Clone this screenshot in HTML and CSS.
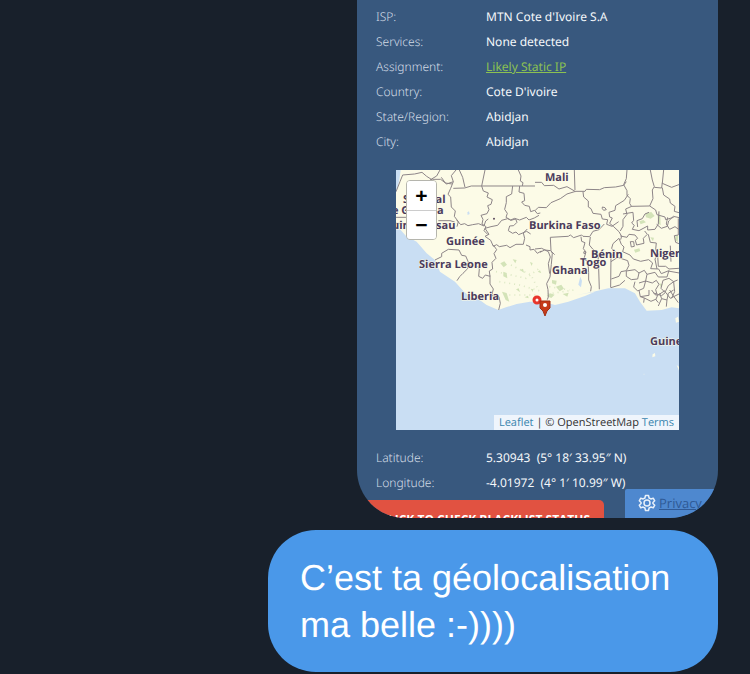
FILE: index.html
```html
<!DOCTYPE html>
<html lang="fr">

<head>
    <meta charset="UTF-8">
    <title>Messages</title>
    <link rel="stylesheet" href="styles.css">
</head>

<body>
    <main class="chat">
        <section class="card">
            <dl class="info">
                <dt>ISP:</dt>
                <dd>MTN Cote d'Ivoire S.A</dd>
                <dt>Services:</dt>
                <dd>None detected</dd>
                <dt>Assignment:</dt>
                <dd><a href="#">Likely Static IP</a></dd>
                <dt>Country:</dt>
                <dd>Cote D'ivoire</dd>
                <dt>State/Region:</dt>
                <dd>Abidjan</dd>
                <dt>City:</dt>
                <dd>Abidjan</dd>
            </dl>

            <div class="map">
                <svg class="tiles" viewBox="0 0 283 260" preserveAspectRatio="xMidYMid slice">
                    <rect class="sea" width="283" height="260" />
                    <!-- land and borders are drawn at three times the map scale -->
                    <g transform="scale(.3333)">
                        <path class="land" d="M14 0L10 30 2 65 0 65V178L12 178 30 198 62 215 92 250 117 270 132 305 177 335 202 363 227 385 244 385 272 405 307 420 330 412 362 402 402 395 432 395 457 400 477 405 517 395 567 378 597 365 540 376 592 365 637 355 687 355 717 370 732 395 752 422 797 420 827 412 849 415V0Z" />
                        <path class="land" d="M838 445l8-5 3 15-9 3zM770 553l7-4 1 10-9 3zM842 585l7 5v12zM742 612l3-1v3z" />
                        <!-- forests -->
                        <g class="green">
                            <path d="M313 280l12-6 8 10-10 8zM322 305l10 4 2 16-12-6zM350 268l12 2-4 10zM372 300l9-4 3 12zM402 276l8 3-3 9zM425 305l7-4 4 9zM318 365l14 4 8 26-11-5zM360 358l8-3 4 12zM386 382l10-5 2 8zM404 356l8 2-2 8zM468 330l14 2-2 12-12-4zM480 350l16-6 8 12-13 8zM452 378l10-8 14 4-10 10zM500 372l18-4-4 12zM748 130l18-4 10 12-12 8-14-4zM785 136l8 2 1 28-8-6zM730 154l12-4 8 7-16 6zM763 202l11 1-3 11zM714 239l16-4 3 8-15 5zM838 195l9 2-2 20-7-6zM790 340l10 3-5 10z" />
                            <path class="speckle" d="M300 305l90 20 40-30M310 335l60 10 70 20M340 375l90 0M345 285l60 30 20 40M460 350l60 10M455 372l80-12" />
                        </g>
                        <path class="lake" d="M214 127l5-3 2 8-6 3zM553 320l5 12-3 20-8-8 3-12z" />
                        <g class="border">
                            <path d="M0 65l12-30 8-20 36-3 22-5 14 12 17 11M102 30l20-12 10-18M109 28l25 0 18 14 20-7-6-18 14-17M136 22l12 17 20 3M172 35l-8 20-8 18 8 8 2 30 12 12-3 16 12 16-4 15M172 55l34-1 20-6 31 0M190 0l10 22 7 30M257 48l10-48M257 48h160M367 0l8 18-2 15 8 5-2 10" />
                            <path d="M257 48l5 15 15 6-4 12 16 8-4 14-10 4 4 12-6 12-18 5 6 12-3 14 12 8-6 12 12 12M182 150l12 14 12-3 10 6 14-3 18-3 16 7 5-15 8-6M267 175l18-5 20-4 12-15 18-5 10 5 14-4 4 10-10 10-12 1-4 14 13 8 10-4 8 8 24-10 12 8" />
                            <path d="M350 48l-3 24-16 8 0 18-5 20 8 12-4 12 14 8 12-5 15 5 20-8 8 8 16-6 14-8M371 48l-2 18 15 4 2 22-9 4 9 10 14 3 4 16 12-4 8 10 9-2" />
                            <path d="M267 175l12 18-12 6 17 12 8 18 10-5 8 6 22-4 10 7 18-10 22 0 4-18-4-16 12-12M292 225l10 14-8 12 6 14-12 12 2 20-10 6 2 16-14-4-8 10-12-6 2-22-4-8M390 225l12 5 0 10 12-2 10 12 12-7M117 270l20-10 0-10 20-12 32 2 8 16 12 2 8 18-2 20-14 14-10 10-8 12M203 275l28 18M282 317l0 25 10 15-5 20 22 3 4 20-5 20M432 247l14-7 18 2 12 12" />
                            <path d="M0 142l30 0M127 152h35l14 4M0 160h20" />
                        </g>
                        <g class="border" transform="translate(417 -15)">
                            <path d="M0 52l20 0 8 10 28-1 16 11 24-7 26 15M118 15l2 60M122 79h28l4-6 40 1 14-6 34-2 24-5 8-11M0 137l10-10 24 1 14-15 28-12 20-14 26-8M276 15l-2 26-8 18 10 18 0 14 10 10-2 14 6 10M346 15l6 30 6 20-6 10 2 26-10 22M358 67l22 2 2-16M386 15l-4 40 28 12 24-9M382 68l4 22 18 12 2 12 14 10-2 15 14 4" />
                            <path d="M144 80l2 16 14 12 0 18 8 5 6 14 24 3 4 14 16 2-3 14 16 6 20-14M280 88l-12 18-26 16-2 14-18 6 2 14 8 3-8 16 12 10 16 15 8 14-3 10M290 124l54-1 18 12 4 14 24 7 2 8 24-7M290 124l-18 8 4 16-12 16 0 20-8 14M202 126l8 2 4 6-8 2-4-5zM256 213l20 4 6-9 18 2 8 10-7 6 4 14 22-5-2-15 12-12-8-10" />
                            <path d="M264 147l30-5 2 24-6 8 8 7-6 12 20 4 26-14 0 12 22-2 10-16 2-38M308 186l-2-19 16-6 8-14 12-5M365 178l14 12 18-6 4-16 14-14 18 4M398 157l-4 20 10 16 16-8 14 10M340 208l6 24 18 2-2 20 8 14-10 14 6 30M430 160v50l-12 2 4 20 10 4M408 290l-2-48M368 268l2 36 22 0 10 8 30-2" />
                            <path d="M46 217l54-3 6-4 10 8 24-8 4 4 20 1 10-16 18-5 16-17M46 217l2 40 4 8-3 33-4 38-10 20 4 18 1 22-3 8M138 215l2 14 10 4-5 18 8 10-6 20 12 10 2 32 0 22 8 20-2 14M166 216l-3 24 10 12 16 14 2 42 2 65M252 220l-18 16-4 14 10 10-12 16-1 92M146 262l3-4 2 6-4 2z" />
                            <path d="M252 220l7 18 8 8-4 14 22 10 10 12 22 7 24-5 12 10-6 17 24 1 8 14 20-8 34 6M286 230l10 0 2 14-9 2zM228 290l20-13 30 10 4 14-8 16-16 3-6 14-23 8M274 318l26-4 12 10-4 18-19 2-15-10zM312 324l16-8 8 12-4 20-20 6M300 350l-4 16 12 12 18-8 6-22 20 6 12-8 8 12-10 16 4 14M336 328l24-6 10 14 26 0 6-20M384 346l18-6 14 10 12-5M384 346l-6 24 12 12 10-20 16-12 3 30-9 20" />
                            <path d="M0 252l20-2 20 10 6 16-6 20 4 30M228 368l26-8 16-14M356 384l24 8 12-10 14 18 28-14" />
                        </g>
                        <g class="border" transform="translate(417 360)">
                            <path d="M312 0l4 20 12 4-2 14M316 20l26-4 0-16M328 24l20 10 14-6 8 10M350 0l10 14 8 2-6 14M368 16l22-14M374 10l6 16-10 22M380 26l16 4 4-20 16-10M396 30l-2 20M404 0l10 16 16 22" />
                        </g>
                        <circle cx="294" cy="146" r="3" fill="#5b4a5c" />
                    </g>
                    <g class="places">
                        <text x="149" y="11">Mali</text>
                        <text x="7" y="33">Sénégal</text>
                        <text x="-4" y="44">e Gambia</text>
                        <text x="-12" y="59">Guiné-Bissau</text>
                        <text x="133" y="59">Burkina Faso</text>
                        <text x="50" y="75">Guinée</text>
                        <text x="23" y="98">Sierra Leone</text>
                        <text x="65" y="130">Liberia</text>
                        <text x="195" y="88">Bénin</text>
                        <text x="184" y="96">Togo</text>
                        <text x="156" y="104">Ghana</text>
                        <text x="254" y="87">Niger</text>
                        <text x="254" y="175">Guine</text>
                    </g>
                    <circle class="dot" cx="141" cy="130" r="3" />
                    <path class="pin" d="M144 131h10v7l-3 3-2 5-2-5-3-3z" />
                    <circle class="hole" cx="149" cy="135" r="2" />
                </svg>
                <div class="zoom">
                    <button type="button" aria-label="Zoom in">+</button>
                    <button type="button" aria-label="Zoom out">−</button>
                </div>
                <div class="credit"><a href="#">Leaflet</a> | © OpenStreetMap <a href="#">Terms</a></div>
            </div>

            <dl class="info">
                <dt>Latitude:</dt>
                <dd>5.30943&nbsp; (5° 18′ 33.95″ N)</dd>
                <dt>Longitude:</dt>
                <dd>-4.01972&nbsp; (4° 1′ 10.99″ W)</dd>
            </dl>

            <div class="actions">
                <button type="button" class="check">CLICK TO CHECK BLACKLIST STATUS</button>
                <div class="privacy">
                    <svg width="18" height="18" viewBox="0 0 24 24">
                        <path d="M10 2h4l.8 3.300 2.300 1.300 3.200-1 2 3.500-2.400 2.300v1.200l2.400 2.300-2 3.500-3.200-1-2.300 1.300L14 22h-4l-.8-3.300-2.300-1.300-3.200 1-2-3.500 2.400-2.300v-1.200L1.700 9.100l2-3.500 3.200 1 2.300-1.300z" />
                        <circle cx="12" cy="12" r="4" />
                    </svg>
                    <a href="#">Privacy</a>
                </div>
            </div>
        </section>

        <p class="bubble">C’est ta géolocalisation ma belle :-))))</p>
    </main>
</body>

</html>
```
FILE: styles.css
```css
* {
    box-sizing: border-box;
    padding: 0;
    margin: 0;
}

body {
    background-color: #18202b;
    font-family: "Open Sans", "Noto Sans", sans-serif;
    text-rendering: geometricPrecision;
}

.chat {
    display: flex;
    flex-direction: column;
    align-items: flex-end;
    gap: 12px;
    padding: 0 32px 2px;
}

/* carte de localisation */
.card {
    width: 100%;
    max-width: 361px;
    padding-top: 4px;
    border-radius: 0 0 48px 48px;
    background-color: #38587e;
    overflow: hidden;
}

.info {
    display: grid;
    grid-template-columns: 110px 1fr;
    padding: 0 19px;
    font-family: "Noto Sans", sans-serif;
    font-size: 12px;
    line-height: 25px;
    color: #f4f7fa;
}

.info dt {
    font-weight: 300;
    color: #d3dce6;
}

.info a {
    color: #8cc152;
}

.map {
    position: relative;
    height: 260px;
    margin: 16px 39px 15px;
    overflow: hidden;
}

.tiles {
    display: block;
    width: 100%;
    height: 100%;
}

.sea {
    fill: #c9def3;
}

.land {
    fill: #fcfbe7;
}

.green {
    fill: #d3e3b8;
}

.speckle {
    fill: none;
    stroke: #dce8c4;
    stroke-width: 5;
    stroke-dasharray: 3 12;
}

.lake {
    fill: #c9def3;
}

.border {
    fill: none;
    stroke: #8d8588;
    stroke-width: 3;
    stroke-linejoin: round;
}

.places {
    font-size: 11px;
    font-weight: 700;
    fill: #4b3b5c;
    stroke: #fcfbe7;
    stroke-width: 1px;
    paint-order: stroke;
}

.dot {
    fill: #fff;
    stroke: #e8352b;
    stroke-width: 3;
}

.pin {
    fill: #c63b1a;
    stroke: #a32f14;
}

.hole {
    fill: #fff;
}

.zoom {
    position: absolute;
    left: 10px;
    top: 10px;
    width: 31px;
    border: 1px solid #b5b5ad;
    border-radius: 4px;
    overflow: hidden;
}

.zoom button {
    display: block;
    width: 100%;
    height: 29px;
    border: 0;
    background-color: #fff;
    font: bold 21px/28px "Liberation Sans", sans-serif;
    color: #000;
}

.zoom button + button {
    border-top: 1px solid #ccc;
}

.credit {
    position: absolute;
    right: 0;
    bottom: 0;
    padding: 0 5px;
    background-color: rgba(255, 255, 255, .7);
    font-size: 11px;
    line-height: 15px;
    color: #333;
    white-space: nowrap;
}

.credit a {
    color: #3a85ae;
    text-decoration: none;
}

/* bas de la carte, coupé par l'arrondi */
.actions {
    display: flex;
    align-items: flex-start;
    gap: 21px;
    height: 29px;
    margin-top: -6px;
}

.check {
    flex: 1;
    height: 38px;
    margin-top: 11px;
    padding-right: 14px;
    border: 0;
    border-radius: 5px;
    background-color: #e15241;
    font: bold 12px "Open Sans", sans-serif;
    color: #fff;
    text-align: right;
    white-space: nowrap;
}

.privacy {
    display: flex;
    gap: 3px;
    width: 93px;
    height: 40px;
    padding: 5px 0 0 13px;
    border-radius: 2px 0 0 0;
    background-color: #4e88cf;
    font-size: 13px;
    line-height: 18px;
}

.privacy svg {
    fill: none;
    stroke: #e8f0fa;
    stroke-width: 2;
    stroke-linejoin: round;
}

.privacy a {
    color: #2f5a96;
}

.bubble {
    width: 100%;
    max-width: 450px;
    padding: 24px 32px;
    border-radius: 48px;
    background-color: #4a98e9;
    font-family: "Liberation Sans", sans-serif;
    font-size: 36px;
    line-height: 47px;
    color: #fff;
}
```
